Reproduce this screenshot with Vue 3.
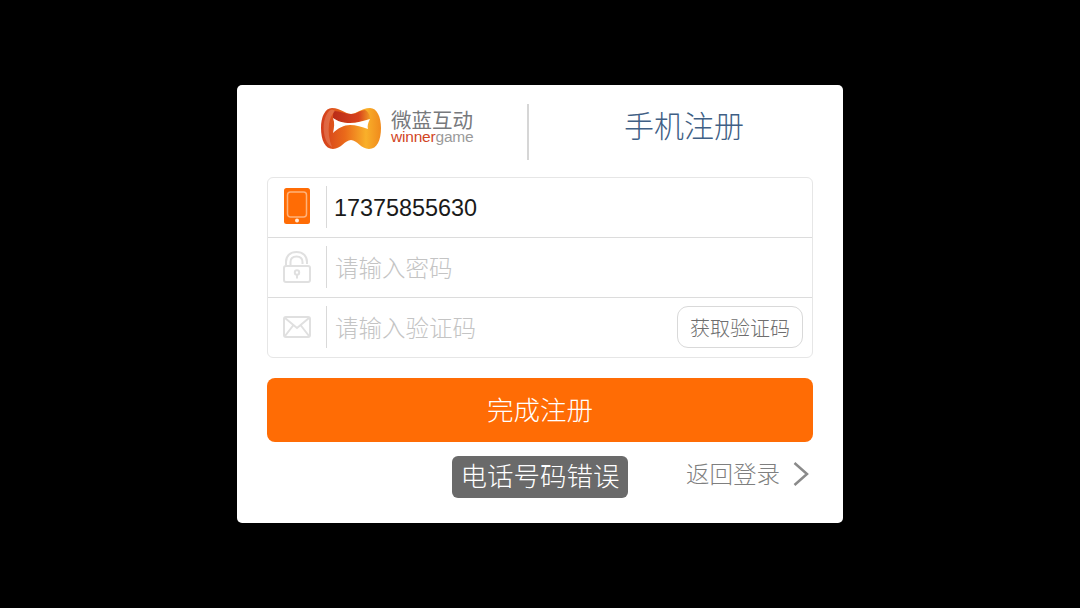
<template>
  <div class="screen">
    <div class="card">
      <div class="head">
        <div class="brand">
          <svg class="logo" width="60" height="41" viewBox="0 0 60 41">
            <defs>
              <linearGradient id="lg" x1="0" y1="0" x2="1" y2="0">
                <stop offset="0" stop-color="#d23c1c" />
                <stop offset="0.4" stop-color="#ea6a1a" />
                <stop offset="0.75" stop-color="#f9b02a" />
                <stop offset="1" stop-color="#f08a1c" />
              </linearGradient>
              <linearGradient id="band" x1="0" y1="0" x2="1" y2="0">
                <stop offset="0" stop-color="#b92c18" />
                <stop offset="0.7" stop-color="#d8421c" />
                <stop offset="1" stop-color="#f09a24" />
              </linearGradient>
            </defs>
            <path d="M11 0C20 0 24 6 30 6C36 6 40 0 49 0C56 0 60 9 60 20C60 32 56 41 48 41C40 41 36 32 30 32C24 32 20 41 12 41C4 41 0 32 0 20C0 9 4 0 11 0Z" fill="url(#lg)" />
            <path d="M13 3C20 3 24 6 30 6C36 6 39 2 44 2C48 4 49 8 49 11C42 13 36 15 29 15C22 15 16 13 12 10C12 7 12 5 13 3Z" fill="url(#band)" />
            <path d="M12 10C16 13 22 15 29 15C36 15 42 13 49 11C47 15 46 18 47 21C41 19 35 17 29 17C23 17 17 20 12 25C13 20 14 15 12 10Z" fill="#fff" />
            <path d="M8 3C3 9 2 17 3 25C4 32 7 37 11 39C8 32 7 24 8 16C9 10 11 6 14 3C12 1 10 1 8 3Z" fill="#f2a58c" opacity="0.35" />
          </svg>
          <div class="brand-text">
            <div class="brand-cn">微蓝互动</div>
            <div class="brand-en"><span class="en-red">winner</span>game</div>
          </div>
        </div>
        <div class="divider"></div>
        <div class="title">手机注册</div>
      </div>

      <div class="fields">
        <div class="row">
          <div class="ico">
            <svg class="phone-ico" width="28" height="38" viewBox="0 0 28 38">
              <rect x="1" y="1" width="26" height="36" rx="2.500" fill="#ff6c05" />
              <rect x="4.500" y="5" width="19" height="25" rx="3" fill="#ff6c05" stroke="#ffb27a" stroke-width="1.500" />
              <circle cx="14" cy="33.500" r="2" fill="#ffe9d8" />
            </svg>
          </div>
          <div class="value">17375855630</div>
        </div>
        <div class="row">
          <div class="ico">
            <svg width="30" height="34" viewBox="0 0 30 34" fill="none" stroke="#e0e0e0" stroke-width="2">
              <path d="M4 16V12C4 6 8 2 14.500 2S25 6 25 12V14" />
              <path d="M8.500 16V12C8.500 8.500 10.500 6.500 14.500 6.500S20.500 8.500 20.500 12V14" />
              <rect x="2" y="16" width="26" height="16" rx="2" />
              <circle cx="15" cy="22.500" r="2.200" />
              <path d="M15 24.500V28.500" />
            </svg>
          </div>
          <div class="placeholder">请输入密码</div>
        </div>
        <div class="row">
          <div class="ico">
            <svg width="30" height="24" viewBox="0 0 30 24" fill="none" stroke="#e0e0e0" stroke-width="2">
              <rect x="2" y="2" width="26" height="20" rx="2" />
              <path d="M3 3L15 13L27 3M3 21L11.500 10M27 21L18.500 10" />
            </svg>
          </div>
          <div class="placeholder">请输入验证码</div>
          <button class="code-btn">获取验证码</button>
        </div>
      </div>

      <button class="submit">完成注册</button>

      <div class="back">
        <span class="back-label">返回登录</span>
        <svg width="18" height="26" viewBox="0 0 18 26" fill="none" stroke="#8a8a8a" stroke-width="2.500">
          <path d="M2.500 2L15 13L2.500 24" />
        </svg>
      </div>

      <div class="toast">电话号码错误</div>
    </div>
  </div>
</template>

<script setup>
</script>

<style>
html, body {
  margin: 0;
  background: #000;
}
</style>

<style scoped>
.screen {
  width: 1080px;
  height: 608px;
  background: #000;
  display: flex;
  justify-content: center;
  padding-top: 85px;
  box-sizing: border-box;
  font-family: "Liberation Sans", "Noto Sans CJK SC", sans-serif;
  font-weight: 300;
}
.card {
  position: relative;
  width: 606px;
  height: 438px;
  background: #fff;
  border-radius: 5px;
  padding: 0 30px;
  box-sizing: border-box;
}
.head {
  display: flex;
  align-items: center;
  height: 92px;
}
.brand {
  width: 260px;
  flex: none;
  display: flex;
  align-items: center;
  gap: 10px;
  padding-left: 54px;
  padding-bottom: 6px;
  box-sizing: border-box;
}
.brand-cn {
  font-size: 20.500px;
  line-height: 18px;
  font-weight: 400;
  color: #77797c;
  white-space: nowrap;
}
.brand-en {
  font-size: 15.500px;
  line-height: 14px;
  color: #9a9a9a;
  letter-spacing: -0.200px;
  white-space: nowrap;
}
.en-red {
  color: #d2451f;
}
.divider {
  width: 2px;
  height: 56px;
  background: #d6d6d6;
  margin-top: 2px;
  flex: none;
}
.title {
  flex: 1;
  text-align: center;
  font-size: 30px;
  color: #3f5f85;
  padding: 0 0 15px 26px;
  box-sizing: border-box;
}
.fields {
  border: 1px solid #e6e6e6;
  border-radius: 6px;
  height: 181px;
  box-sizing: border-box;
}
.row {
  display: flex;
  align-items: center;
  height: 60px;
  border-bottom: 1px solid #dcdcdc;
  box-sizing: border-box;
  padding-right: 9px;
}
.row:last-child {
  border-bottom: none;
  height: 59px;
}
.ico {
  width: 58px;
  height: 42px;
  margin-bottom: 2px;
  flex: none;
  display: flex;
  align-items: center;
  justify-content: center;
  border-right: 1px solid #d9d9d9;
}
.phone-ico {
  margin-bottom: 2px;
}
.value {
  font-size: 23.400px;
  color: #1a1a1a;
  padding-left: 7px;
  padding-top: 2px;
}
.placeholder {
  flex: 1;
  font-size: 23.500px;
  color: #c4c4c4;
  padding-left: 8px;
  padding-bottom: 2px;
}
.code-btn {
  width: 126px;
  height: 42px;
  margin-bottom: 2px;
  border: 1px solid #d9d9d9;
  border-radius: 11px;
  background: #fff;
  font-family: inherit;
  font-weight: inherit;
  font-size: 20px;
  color: #6e6e6e;
  padding: 1px 0 0;
}
.submit {
  display: block;
  width: 100%;
  height: 64px;
  margin-top: 20px;
  border: none;
  border-radius: 8px;
  background: #ff6c05;
  color: #fff;
  font-family: inherit;
  font-weight: inherit;
  font-size: 26.500px;
  padding: 0 0 4px;
}
.back {
  display: flex;
  justify-content: flex-end;
  align-items: center;
  gap: 12px;
  margin-top: 14px;
  padding-right: 3px;
  font-size: 23.500px;
  color: #7f7f7f;
}
.back-label {
  margin-bottom: 2px;
}
.toast {
  position: absolute;
  left: 215px;
  top: 371px;
  width: 176px;
  height: 42px;
  line-height: 42px;
  text-align: center;
  background: #6a6a6a;
  color: #fff;
  border-radius: 6px;
  font-size: 26.500px;
}
</style>
